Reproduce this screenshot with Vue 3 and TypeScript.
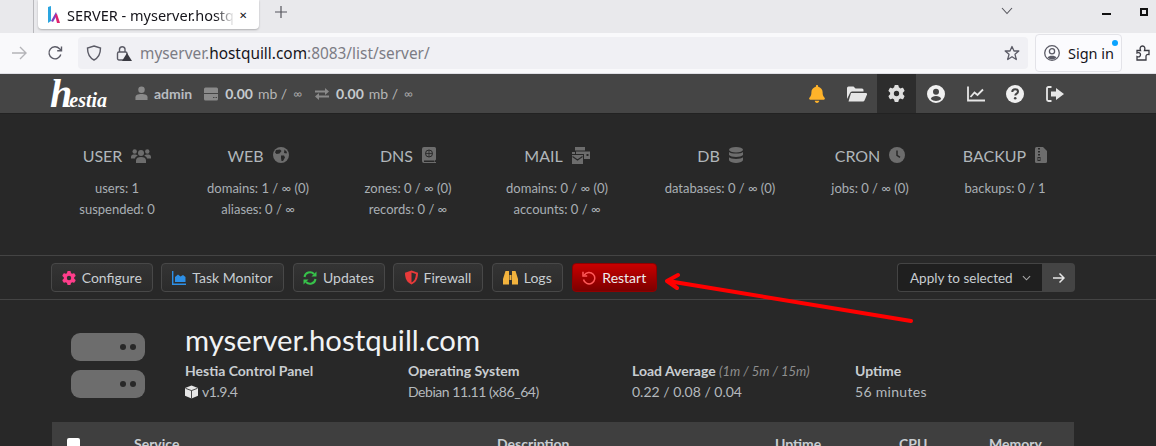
<script setup lang="ts">
const gear = 'M495.9 166.6c3.2 8.7 .5 18.4-6.4 24.6l-43.3 39.4c1.1 8.3 1.7 16.8 1.7 25.4s-.6 17.1-1.7 25.4l43.3 39.4c6.9 6.2 9.6 15.9 6.4 24.6c-4.4 11.9-9.7 23.3-15.8 34.3l-4.7 8.1c-6.6 11-14 21.4-22.1 31.2c-5.9 7.2-15.7 9.6-24.5 6.8l-55.7-17.7c-13.4 10.3-28.2 18.9-44 25.4l-12.5 57.1c-2 9.1-9 16.3-18.2 17.8c-13.8 2.3-28 3.5-42.5 3.5s-28.7-1.2-42.5-3.5c-9.2-1.5-16.2-8.7-18.2-17.8l-12.5-57.1c-15.8-6.5-30.6-15.1-44-25.4L83.1 425.9c-8.8 2.8-18.6 .3-24.5-6.8c-8.1-9.8-15.5-20.2-22.1-31.2l-4.7-8.1c-6.1-11-11.4-22.4-15.8-34.3c-3.2-8.7-.5-18.4 6.4-24.6l43.3-39.4C64.6 273.1 64 264.6 64 256s.6-17.1 1.7-25.4L22.4 191.2c-6.9-6.2-9.6-15.9-6.4-24.6c4.4-11.9 9.7-23.3 15.8-34.3l4.7-8.1c6.6-11 14-21.4 22.1-31.2c5.9-7.2 15.7-9.6 24.5-6.8l55.7 17.7c13.4-10.3 28.2-18.9 44-25.4l12.5-57.1c2-9.1 9-16.3 18.2-17.8C227.3 1.2 241.5 0 256 0s28.7 1.2 42.5 3.5c9.2 1.5 16.2 8.7 18.2 17.8l12.5 57.1c15.8 6.5 30.6 15.1 44 25.4l55.7-17.7c8.8-2.8 18.6-.3 24.5 6.8c8.1 9.8 15.5 20.2 22.1 31.2l4.7 8.1c6.1 11 11.4 22.4 15.8 34.3zM256 336a80 80 0 1 0 0-160 80 80 0 1 0 0 160z'
const bell = 'M224 0c-17.7 0-32 14.3-32 32V51.2C119 66 64 130.6 64 208v18.8c0 47-17.3 92.4-48.5 127.6l-7.4 8.3c-8.4 9.4-10.4 22.9-5.3 34.4S19.4 416 32 416H416c12.6 0 24-7.4 29.2-18.9s3.1-25-5.3-34.4l-7.4-8.3C401.3 319.2 384 273.9 384 226.8V208c0-77.4-55-142-128-156.8V32c0-17.7-14.3-32-32-32zm45.3 493.3c12-12 18.7-28.3 18.7-45.3H224 160c0 17 6.7 33.3 18.7 45.3s28.3 18.7 45.3 18.7s33.3-6.7 45.3-18.7z'

type Stat = { title: string; lines: string[]; width: number; icon: string }
const stats: Stat[] = [
  { title: 'USER', lines: ['users: 1', 'suspended: 0'], width: 134, icon: 'users' },
  { title: 'WEB', lines: ['domains: 1 / ∞ (0)', 'aliases: 0 / ∞'], width: 148, icon: 'globe' },
  { title: 'DNS', lines: ['zones: 0 / ∞ (0)', 'records: 0 / ∞'], width: 152, icon: 'book' },
  { title: 'MAIL', lines: ['domains: 0 / ∞ (0)', 'accounts: 0 / ∞'], width: 146, icon: 'mail' },
  { title: 'DB', lines: ['databases: 0 / ∞ (0)'], width: 180, icon: 'db' },
  { title: 'CRON', lines: ['jobs: 0 / ∞ (0)'], width: 120, icon: 'clock' },
  { title: 'BACKUP', lines: ['backups: 0 / 1'], width: 150, icon: 'zip' },
]
const actions = [
  { label: 'Configure', icon: 'gear', w: 101.5 },
  { label: 'Task Monitor', icon: 'area', w: 123 },
  { label: 'Updates', icon: 'sync', w: 92 },
  { label: 'Firewall', icon: 'shield', w: 90 },
  { label: 'Logs', icon: 'bino', w: 71.5 },
]
const colStyle = (w: number) => ({ width: w + 'px' })
</script>

<template>
  <div class="root">
    <div class="tabstrip">
      <div class="tab-sep"></div>
      <div class="tab">
        <svg class="favicon" viewBox="0 0 14 18" width="14" height="18">
          <path d="M1 1 L4 0 L4 15 L1 17 Z" fill="#2aa5e0" />
          <path d="M4 15 L9 6 L10 9 L6 16 Z" fill="#7a3fc0" />
          <path d="M8 9 L10 8 L13 17 L10 17 Z" fill="#e0246f" />
        </svg>
        <span class="tab-title">SERVER - myserver.hostq</span>
        <span class="tab-close">✕</span>
      </div>
      <svg class="plus" viewBox="0 0 12 12" width="12" height="12"><path d="M6 0V12M0 6H12" stroke="#55555c" stroke-width="1.2" /></svg>
      <svg class="chev" viewBox="0 0 12 8" width="12" height="8"><path d="M1 1L6 6.5L11 1" fill="none" stroke="#55555c" stroke-width="1.1" /></svg>
      <div class="winbtn min"></div>
      <div class="winbtn max"></div>
    </div>

    <div class="navbar">
      <svg class="nav-ico back" viewBox="0 0 16 16" width="16" height="16"><path d="M1 8H15M9 2L15 8L9 14" fill="none" stroke="#b4b4b8" stroke-width="1.4" /></svg>
      <svg class="nav-ico reload" viewBox="0 0 16 16" width="16" height="16"><path d="M13.8 9.5A6 6 0 1 1 12.5 3.8L14.5 5.5M14.5 1.5V5.8H10.2" fill="none" stroke="#5b5b66" stroke-width="1.4" /></svg>
      <div class="urlbar">
        <svg class="shield-ico" viewBox="0 0 16 16" width="16" height="16"><path d="M8 1L14.5 3C14.5 9 13 12.5 8 15C3 12.5 1.500 9 1.500 3Z" fill="none" stroke="#5b5b66" stroke-width="1.4" /></svg>
        <svg class="lock-ico" viewBox="0 0 16 16" width="16" height="16">
          <rect x="1.500" y="7" width="9.500" height="8" rx="1.500" fill="none" stroke="#5b5b66" stroke-width="1.4" />
          <path d="M3.500 7V4A2.800 2.800 0 0 1 9 4V7" fill="none" stroke="#5b5b66" stroke-width="1.4" />
          <path d="M11 8L16 16H6Z" fill="#3a3a42" />
        </svg>
        <span class="url"><span class="dim">myserver.</span>hostquill.com<span class="dim">:8083/list/server/</span></span>
        <svg class="star" viewBox="0 0 16 16" width="16" height="16"><path d="M8 1.500L10 6H14.800L11 9.300L12.300 14.500L8 11.700L3.700 14.500L5 9.300L1.200 6H6Z" fill="none" stroke="#5b5b66" stroke-width="1.3" stroke-linejoin="round" /></svg>
      </div>
      <div class="signin">
        <svg viewBox="0 0 16 16" width="16" height="16"><circle cx="8" cy="8" r="7.300" fill="none" stroke="#5b5b66" stroke-width="1.300" /><circle cx="8" cy="6.300" r="2.600" fill="none" stroke="#5b5b66" stroke-width="1.300" /><path d="M3.500 12.500C5 10 11 10 12.500 12.500C10 15 6 15 3.500 12.500Z" fill="#5b5b66" /></svg>
        <span>Sign in</span>
        <i class="signin-dot"></i>
      </div>
      <svg class="puzzle" viewBox="0 0 16 16" width="16" height="16"><path d="M2 5.500H5.500C4.500 3 5.500 1 7.500 1C9.500 1 10.500 3 9.500 5.500H14V9.500C12 9 11 10 11 11.300V15H2V11.500C4.500 12.500 5.500 11 5.500 9.500C5.500 8 4 7 2 8Z" fill="none" stroke="#3a3a42" stroke-width="1.300" /></svg>
    </div>

    <header class="topbar">
      <div class="inner top-inner">
        <div class="logo"><span class="logo-h">h</span><span class="logo-rest">estia</span></div>
        <div class="usage">
          <svg class="u-ico" viewBox="0 0 14 16" width="13" height="15"><circle cx="7" cy="4" r="3.500" fill="#8a8a8a" /><path d="M0.500 15V12C0.500 9.500 3 8.500 7 8.500C11 8.500 13.500 9.500 13.500 12V15Z" fill="#8a8a8a" /></svg>
          <b class="admin">admin</b>
          <svg class="u-ico hdd" viewBox="0 0 14 14" width="14" height="14"><path d="M1.500 0.500H12.500Q14 0.500 14 2V6H0V2Q0 0.500 1.500 0.500Z" fill="#8a8a8a" /><path d="M0 7H14V12Q14 13.500 12.500 13.500H1.500Q0 13.500 0 12ZM9 10v1h1.500v-1ZM11.500 10v1H13v-1Z" fill="#8a8a8a" fill-rule="evenodd" /></svg>
          <span class="num">0.00</span><span class="unit">mb /</span><span class="inf">∞</span>
          <svg class="u-ico arrows" viewBox="0 0 14 14" width="14" height="14"><path d="M0 3.500H10V1L14 4.500L10 8V5.500H0ZM14 8.500H4V6L0 9.500L4 13V10.500H14Z" fill="#8a8a8a" /></svg>
          <span class="num">0.00</span><span class="unit">mb /</span><span class="inf">∞</span>
        </div>
        <nav class="topnav">
          <a class="tn"><svg viewBox="0 0 448 512" width="16" height="18"><path :d="bell" fill="#ffb32a" /></svg></a>
          <a class="tn"><svg viewBox="0 0 20 16" width="20" height="16"><path d="M0 2Q0 0.500 1.500 0.500H6.500L8.500 2.500H15Q16.500 2.500 16.500 4V5.500H5Q3.500 5.500 3 7L0 13Z" fill="#e6e6e6" /><path d="M4 7H19Q20.500 7 20 8.500L17.500 14.500Q17 15.500 16 15.500H1.500Z" fill="#e6e6e6" /></svg></a>
          <a class="tn active"><svg viewBox="0 0 512 512" width="17" height="17"><path :d="gear" fill="#dedede" /></svg></a>
          <a class="tn"><svg viewBox="0 0 18 18" width="18" height="18"><path d="M9 0a9 9 0 1 0 0 18a9 9 0 1 0 0-18ZM9 3.800a3 3 0 1 1 0 6a3 3 0 1 1 0-6ZM3.800 14C4.500 11.800 6.500 11 9 11C11.500 11 13.500 11.800 14.200 14C12.800 15.300 11 16 9 16C7 16 5.200 15.300 3.800 14Z" fill="#f0f0f0" fill-rule="evenodd" /></svg></a>
          <a class="tn"><svg viewBox="0 0 18 16" width="18" height="16"><path d="M1 0.500V14.500H18" fill="none" stroke="#e6e6e6" stroke-width="1.800" /><path d="M3.500 11L7.500 6.500L10.500 9L16 3.500" fill="none" stroke="#e6e6e6" stroke-width="1.800" /></svg></a>
          <a class="tn"><svg viewBox="0 0 18 18" width="18" height="18"><circle cx="9" cy="9" r="9" fill="#f0f0f0" /><path d="M6.300 7C6.300 5.200 7.500 4.300 9.100 4.300C10.800 4.300 12 5.300 12 6.700C12 8.600 9.300 8.600 9.300 10.500" fill="none" stroke="#454545" stroke-width="2" /><circle cx="9.200" cy="13.200" r="1.300" fill="#454545" /></svg></a>
          <a class="tn"><svg viewBox="0 0 18 16" width="18" height="16"><path d="M5.500 1H2.500Q1 1 1 2.500V13.500Q1 15 2.500 15H5.500" fill="none" stroke="#e6e6e6" stroke-width="1.800" /><path d="M5 5.500H10V2L18 8L10 14V10.500H5Z" fill="#e6e6e6" /></svg></a>
        </nav>
      </div>
    </header>

    <main class="content">
      <section class="stats">
        <div v-for="s in stats" :key="s.title" class="stat" :style="colStyle(s.width)">
          <div class="stat-title">
            <span>{{ s.title }}</span>
            <svg v-if="s.icon === 'users'" viewBox="0 0 20 15" width="20" height="15"><circle cx="10" cy="5" r="3" fill="#6d6d6d" /><circle cx="3.700" cy="3.500" r="2.200" fill="#6d6d6d" /><circle cx="16.300" cy="3.500" r="2.200" fill="#6d6d6d" /><path d="M5 15V12.500C5 10 7 9 10 9C13 9 15 10 15 12.500V15ZM0 9C0 7 1.500 6.500 3.500 6.500C5 6.500 6 7 6.800 7.800C5.300 8.300 4.300 9.300 4 10.500H0ZM20 9C20 7 18.500 6.500 16.500 6.500C15 6.500 14 7 13.200 7.800C14.700 8.300 15.700 9.300 16 10.500H20Z" fill="#6d6d6d" /></svg>
            <svg v-else-if="s.icon === 'globe'" viewBox="0 0 16 16" width="16" height="16"><circle cx="8" cy="8" r="8" fill="#6d6d6d" /><path d="M3 3L7 2.500L8.500 4L6.500 6.500L3.500 7L2 5.500ZM8 8.500L11 8.500L12 10.500L10 14L8.500 14L8 11ZM11.500 2.500L14 5L13.500 6.500L11 6Z" fill="#282828" /></svg>
            <svg v-else-if="s.icon === 'book'" viewBox="0 0 14 16" width="14" height="16"><path d="M2 0H12.500Q14 0 14 1.500V12Q14 13 13 13.500V15H14V16H2Q0 16 0 14V2Q0 0 2 0Z" fill="#6d6d6d" /><circle cx="7" cy="6.500" r="3.500" fill="none" stroke="#282828" stroke-width="1" /><path d="M7 3V10M3.500 6.500H10.500" stroke="#282828" stroke-width="0.800" /><path d="M2 13.500H12.500V15H2Z" fill="#282828" /></svg>
            <svg v-else-if="s.icon === 'mail'" viewBox="0 0 18 17" width="18" height="17"><path d="M3 0H13V3.500H3ZM0 5H3V7H0Z" fill="#6d6d6d" /><path d="M4 4.500H18V12H12V7H4Z" fill="#6d6d6d" /><path d="M0 8H11V17H0Z" fill="#6d6d6d" /><path d="M0.500 9.500L5.500 13L10.500 9.500" fill="none" stroke="#282828" stroke-width="1.100" /><rect x="14.500" y="7" width="2" height="2" fill="#282828" /></svg>
            <svg v-else-if="s.icon === 'db'" viewBox="0 0 14 16" width="14" height="16"><ellipse cx="7" cy="2.800" rx="7" ry="2.800" fill="#6d6d6d" /><path d="M0 5C2 7 12 7 14 5V8C12 10.500 2 10.500 0 8ZM0 10.200C2 12.500 12 12.500 14 10.200V13.200C12 16.800 2 16.800 0 13.200Z" fill="#6d6d6d" /></svg>
            <svg v-else-if="s.icon === 'clock'" viewBox="0 0 16 16" width="16" height="16"><circle cx="8" cy="8" r="8" fill="#6d6d6d" /><path d="M8 3.500V8.300L11 10.300" fill="none" stroke="#282828" stroke-width="1.500" /></svg>
            <svg v-else viewBox="0 0 12 16" width="12" height="16"><path d="M1.500 0H8L12 4V14.500Q12 16 10.500 16H1.500Q0 16 0 14.500V1.500Q0 0 1.500 0Z" fill="#6d6d6d" /><path d="M3 1H5V2.500H3ZM3 4H5V5.500H3ZM3 7H5V8.500H3ZM2.500 10H5.500V14H2.500Z" fill="#282828" /><circle cx="4" cy="12" r="1" fill="#6d6d6d" /></svg>
          </div>
          <p v-for="l in s.lines" :key="l" class="stat-line">{{ l }}</p>
        </div>
      </section>

      <section class="toolbar">
        <div class="inner tool-inner">
          <div class="btns">
            <a v-for="a in actions" :key="a.label" class="btn" :style="colStyle(a.w)">
              <svg v-if="a.icon === 'gear'" viewBox="0 0 512 512" width="14" height="14"><path :d="gear" fill="#ff3d8b" /></svg>
              <svg v-else-if="a.icon === 'area'" viewBox="0 0 14 14" width="14" height="14"><path d="M0.700 0V13.300H14" fill="none" stroke="#2d8fe6" stroke-width="1.400" /><path d="M3 11V6L6 3.500L8.500 5.500L11 4L13.500 6V11Z" fill="#2d8fe6" /></svg>
              <svg v-else-if="a.icon === 'sync'" viewBox="0 0 14 14" width="14" height="14"><path d="M1.500 6A5.500 5.500 0 0 1 11 3" fill="none" stroke="#37c24a" stroke-width="2" /><path d="M13.500 0.500V5.500H8.500Z" fill="#37c24a" /><path d="M12.500 8A5.500 5.500 0 0 1 3 11" fill="none" stroke="#37c24a" stroke-width="2" /><path d="M0.500 13.500V8.500H5.500Z" fill="#37c24a" /></svg>
              <svg v-else-if="a.icon === 'shield'" viewBox="0 0 14 15" width="13" height="15"><path d="M7 0L14 2.500C14 9 12 13 7 15C2 13 0 9 0 2.500Z" fill="#e83a3a" /><path d="M7 2L11.800 3.800C11.500 8.500 10 11.500 7 13Z" fill="#2e2e2e" /></svg>
              <svg v-else viewBox="0 0 15 14" width="15" height="14"><path d="M2.500 0H6V13.500H0V8Z" fill="#f3b33d" /><path d="M9 0H12.500L15 8V13.500H9Z" fill="#f3b33d" /><path d="M6.500 4H8.500V9H6.500Z" fill="#f3b33d" /></svg>
              <span>{{ a.label }}</span>
            </a>
            <a class="btn restart">
              <svg viewBox="0 0 14 14" width="14" height="14"><path d="M2.200 4.200A5.700 5.700 0 1 1 1.500 8.500" fill="none" stroke="#ff5a5a" stroke-width="1.500" /><path d="M1 0.800V5H5.200" fill="none" stroke="#ff5a5a" stroke-width="1.500" /></svg>
              <span>Restart</span>
            </a>
          </div>
          <div class="apply">
            <div class="apply-sel"><span>Apply to selected</span><svg viewBox="0 0 10 6" width="9" height="6"><path d="M1 1L5 5L9 1" fill="none" stroke="#aaa" stroke-width="1.200" /></svg></div>
            <div class="apply-go"><svg viewBox="0 0 12 12" width="12" height="12"><path d="M0 6H11M6.500 1.500L11 6L6.500 10.500" fill="none" stroke="#e6e6e6" stroke-width="1.500" /></svg></div>
          </div>
        </div>
      </section>

      <section class="server inner">
        <div class="srv-icon">
          <div class="srv-bar"><i></i><i></i></div>
          <div class="srv-bar"><i></i><i></i></div>
        </div>
        <div class="srv-main">
          <h1>myserver.hostquill.com</h1>
          <div class="srv-grid">
            <div class="g1"><b>Hestia Control Panel</b><p class="tight"><svg viewBox="0 0 14 14" width="13" height="14"><path d="M7 0L14 2.800V11L7 14L0 11V2.800Z" fill="#e6e6e6" /><path d="M7 5.500V14M0.500 3L7 5.500L13.500 3" fill="none" stroke="#282828" stroke-width="0.900" /></svg> v1.9.4</p></div>
            <div class="g2"><b>Operating System</b><p class="tight">Debian 11.11 (x86_64)</p></div>
            <div class="g3"><b>Load Average <em>(1m / 5m / 15m)</em></b><p>0.22 / 0.08 / 0.04</p></div>
            <div class="g4"><b>Uptime</b><p class="wide">56 minutes</p></div>
          </div>
        </div>
      </section>

      <section class="thead">
        <span class="cb"></span>
        <span class="th t-service">Service</span>
        <span class="th t-desc">Description</span>
        <span class="th t-up">Uptime</span>
        <span class="th t-cpu">CPU</span>
        <span class="th t-mem">Memory</span>
      </section>
    </main>

    <svg class="red-arrow" viewBox="0 0 1156 446" width="1156" height="446">
      <path d="M911 321L668 281M678 275L667 281L677 288" fill="none" stroke="#f00" stroke-width="4" stroke-linecap="round" stroke-linejoin="round" />
    </svg>
  </div>
</template>

<style>
html, body { margin: 0; background: #282828; overflow: hidden; }
</style>

<style scoped>
.root { width: 1156px; height: 446px; overflow: hidden; position: relative; font-family: Lato, "Liberation Sans", sans-serif; }
p, h1 { margin: 0; font-weight: inherit; }
.tabstrip { height: 33px; background: #e9e9ec; display: flex; align-items: flex-start; position: relative; font-family: "Noto Sans", sans-serif; }
.tab-sep { width: 1px; height: 33px; background: #b9b9bd; margin-left: 33px; }
.tab { margin-left: 4px; width: 221px; height: 29px; box-sizing: border-box; background: #fff; border-radius: 0 0 4px 4px; box-shadow: 0 1px 2px rgba(0,0,0,.25); display: flex; align-items: center; padding-left: 9px; }
.favicon { flex: none; }
.tab-title { margin-left: 6px; width: 168px; white-space: nowrap; overflow: hidden; font-size: 14.5px; color: #15141a; -webkit-mask-image: linear-gradient(90deg, #000 88%, transparent); mask-image: linear-gradient(90deg, #000 88%, transparent); }
.tab-close { font-size: 10px; margin-left: 4px; color: #15141a; }
.plus { margin: 6px 0 0 16px; }
.chev { margin: 7px 0 0 714px; }
.winbtn { position: absolute; }
.min { left: 1102px; top: 13px; width: 9px; height: 2px; background: #111; }
.max { left: 1140px; top: 8px; width: 4px; height: 4px; border: 2px solid #111; }
.navbar { height: 40px; background: #f9f9fb; border-bottom: 1px solid #e0e0e6; display: flex; align-items: center; font-family: "Noto Sans", sans-serif; }
.nav-ico.back { margin-left: 11px; }
.nav-ico.reload { margin-left: 20px; }
.urlbar { margin-left: 15px; width: 950px; height: 32px; border-radius: 4px; background: #f0f0f4; display: flex; align-items: center; }
.shield-ico { margin-left: 8px; }
.lock-ico { margin-left: 14px; }
.url { margin-left: 8px; font-size: 15.4px; color: #15141a; flex: 1; }
.dim { color: #7c7c84; }
.star { margin-right: 8px; }
.signin { margin-left: 7px; width: 87px; height: 38px; box-sizing: border-box; border: 1px solid #e3e3e8; border-radius: 4px; background: #fbfbfe; display: flex; align-items: center; padding-left: 8px; gap: 8px; font-size: 14.500px; color: #15141a; position: relative; }
.signin-dot { position: absolute; right: 3px; top: 5px; width: 6px; height: 6px; border-radius: 50%; background: #0aa3ff; }
.puzzle { margin-left: 13px; }
.inner { width: 1023px; margin-left: 52px; }
.topbar { height: 39px; background: #454545; border-bottom: 1px solid #222; box-sizing: content-box; }
.top-inner { display: flex; align-items: center; height: 39px; }
.logo { width: 85px; margin-left: -2px; color: #fff; font-family: "Liberation Serif", serif; font-weight: 700; font-style: italic; display: flex; align-items: baseline; }
.logo-h { font-size: 40px; line-height: 36px; }
.logo-rest { font-size: 20px; margin-left: -3px; }
.usage { display: flex; align-items: center; color: #bbb; font-size: 14px; }
.admin { margin-left: 6px; margin-right: 12px; color: #b8bcc0; }
.num { font-weight: 700; margin-left: 7px; color: #c5cace; }
.unit { margin-left: 5px; color: #b5b5b5; }
.inf { margin-left: 6px; color: #a5a5a5; font-size: 12px; }
.arrows { margin-left: 13px; }
.hdd { margin-left: 0; }
.topnav { display: flex; margin-left: auto; margin-right: 0; }
.tn { width: 39.7px; height: 39px; display: flex; align-items: center; justify-content: center; }
.tn.active { background: #2d2d2d; }
.content { background: #282828; height: 332px; }
.stats { height: 141px; box-sizing: border-box; padding: 31px 0 0 50px; display: flex; color: #b9bfc4; }
.stat { text-align: center; flex: none; }
.stat-title { display: flex; justify-content: center; align-items: center; gap: 9px; height: 20px; font-size: 16px; margin-bottom: 13px; color: #b0b6ba; }
.stat-line { font-size: 13px; line-height: 21px; color: #a9afb4; }
.toolbar { border-top: 1px solid #444; border-bottom: 1px solid #444; height: 43px; }
.tool-inner { display: flex; justify-content: space-between; align-items: center; height: 43px; margin-left: 51px; width: 1024px; }
.btns { display: flex; gap: 8.500px; }
.btn { height: 29px; box-sizing: border-box; border: 1px solid #484848; border-radius: 4px; background: linear-gradient(#343434, #2b2b2b); display: flex; align-items: center; justify-content: center; gap: 6px; color: #c8cdd1; font-size: 14px; }
.restart { width: 85.5px; background: linear-gradient(#c80000, #7c0000); border-color: #8f0000; color: #eee; }
.apply { display: flex; height: 29px; font-size: 13.5px; color: #c8cdd1; }
.apply-sel { width: 145px; box-sizing: border-box; background: #1f1f1f; border: 1px solid #444; border-right: 0; border-radius: 4px 0 0 4px; display: flex; align-items: center; gap: 9px; padding-left: 12px; }
.apply-go { width: 33px; background: #444; border-radius: 0 4px 4px 0; display: flex; align-items: center; justify-content: center; }
.server { display: flex; height: 122px; margin-left: 71px; width: 1000px; }
.srv-icon { width: 74px; margin-right: 40px; padding-top: 33px; display: flex; flex-direction: column; gap: 9px; flex: none; }
.srv-bar { height: 28px; border-radius: 9px; background: #6d6d6d; display: flex; align-items: center; justify-content: flex-end; gap: 4px; padding-right: 9px; }
.srv-bar i { width: 6px; height: 6px; background: #282828; border-radius: 50%; }
.srv-main { flex: 1; padding-top: 22px; }
h1 { font-size: 29.3px; line-height: 36px; color: #f0f2f4; }
.srv-grid { display: flex; margin-top: 3px; }
.srv-grid b { display: block; font-size: 14px; line-height: 20px; font-weight: 700; color: #c8cdd1; }
.srv-grid p { font-size: 14px; line-height: 22px; color: #b4b9bd; display: flex; align-items: center; gap: 4px; }
.srv-grid p.tight { letter-spacing: -0.45px; }
.srv-grid p.wide { letter-spacing: 0.3px; }
em { font-weight: 400; color: #8f8f8f; font-size: 13px; }
.g1 { width: 223px; }
.g2 { width: 224px; }
.g3 { width: 223px; }
.thead { position: relative; margin-left: 52px; width: 1022px; height: 40px; background: #3f3f3f; color: #c8cdd1; font-size: 14px; font-weight: 700; display: flex; align-items: flex-start; padding-top: 16px; box-sizing: border-box; }
.cb { width: 13px; height: 13px; background: #fff; border-radius: 2px; margin-left: 15px; flex: none; }
.th { line-height: 16px; flex: none; margin-top: -2px; }
.t-service { margin-left: 54px; width: 363px; }
.t-desc { width: 278px; }
.t-up { width: 124px; }
.t-cpu { width: 90px; }
.red-arrow { position: absolute; left: 0; top: 0; pointer-events: none; }
</style>
